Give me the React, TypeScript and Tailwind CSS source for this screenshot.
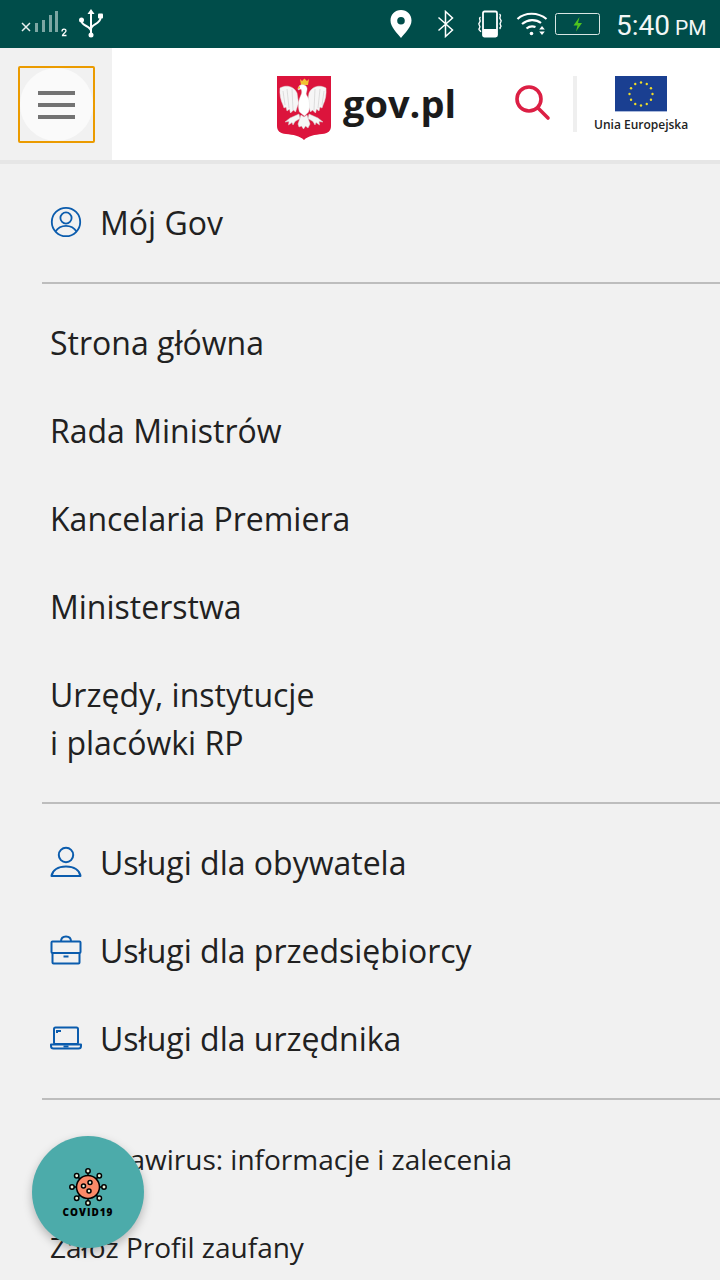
import React from 'react';

const BLUE = '#0b5cad';

const UserCircle = () => (
  <svg width="32" height="32" viewBox="0 0 32 32" fill="none" stroke={BLUE} strokeWidth="1.800">
    <circle cx="16" cy="16" r="14.2" />
    <circle cx="16" cy="12" r="5.6" />
    <path d="M5.500 25.500C8 21.500 11.500 19.800 16 19.800s8 1.700 10.500 5.700" />
  </svg>
);

const UserIcon = () => (
  <svg width="32" height="32" viewBox="0 0 32 32" fill="none" stroke={BLUE} strokeWidth="2">
    <circle cx="16" cy="9" r="7.2" />
    <path d="M1.500 30C2.500 24 8 20.500 16 20.500S29.500 24 30.500 30Z" strokeLinejoin="round" />
  </svg>
);

const BriefcaseIcon = () => (
  <svg width="32" height="30" viewBox="0 0 32 30" fill="none" stroke={BLUE} strokeWidth="2">
    <path d="M11 6.500C11 3 13 1.500 16 1.500S21 3 21 6.500" />
    <rect x="1.500" y="6.500" width="29" height="11.500" rx="1" />
    <rect x="2.500" y="18" width="27" height="10.500" rx="1" />
    <path d="M13.500 21.500h5" />
  </svg>
);

const LaptopIcon = () => (
  <svg width="32" height="24" viewBox="0 0 32 24" fill="none" stroke={BLUE} strokeWidth="2">
    <rect x="4" y="1.500" width="24" height="16.500" rx="1.500" />
    <path d="M7 7V5h4" />
    <path d="M1 18.500h30v1.500c0 1.500-1 2.500-2.500 2.500h-25C2 22.500 1 21.500 1 20Z" strokeLinejoin="round" />
    <path d="M13.500 20.500h5" />
  </svg>
);

const Eagle = () => (
  <svg width="54" height="64" viewBox="0 0 54 64">
    <path d="M0 0h54v50c0 5-3 7.500-9 8-7 .6-14 2-18 6-4-4-11-5.400-18-6-6-.5-9-3-9-8Z" fill="#dc143c" />
    <path d="M23 3l2 2 2.500-2.500L30 5l2-2-1 6h-7Z" fill="#f2c230" />
    {/* wings */}
    <path d="M20 17C17 10 9 8.500 3 12c-.5 6 .5 12 3 17l1 3 2-1 1 4 2.500-2 1 4 3-3 2 2 3-9Z" fill="#f6f6f6" stroke="#dcdcdc" strokeWidth="0.5" />
    <path d="M32 17c3-7 11-8.500 17-5 .5 6-.5 12-3 17l-1 3-2-1-1 4-2.500-2-1 4-3-3-2 2-3-9Z" fill="#f6f6f6" stroke="#dcdcdc" strokeWidth="0.5" />
    <path d="M6 15l2 14M10 13l2 19M15 13l1 21M47 15l-2 14M43 13l-2 19M38 13l-1 21" stroke="#d6d6d6" strokeWidth="0.8" />
    {/* head and body */}
    <path d="M22 10c2-2 7-2 8 2 .5 3-1.500 5-.5 7 3 4 4 11 2 17l-4 4-5-4c-2-6-1-12 1.500-17 1-2 1-4 0-6l-3 1Z" fill="#fff" stroke="#dedede" strokeWidth="0.4" />
    <path d="M20 12.500l3-2.500v2.500Z" fill="#f2c230" />
    {/* tail and legs */}
    <path d="M24 39l3 2 3-2 3 9-2 4-2.500-2-2 3-2-3-2.500 1-1-3Z" fill="#f6f6f6" stroke="#d6d6d6" strokeWidth="0.5" />
    <path d="M22 38l-9 4-5 4 4-.5-.5 3.500 3.500-2.500 1 2.500 2-3.500 5-3ZM32 38l9 4 5 4-4-.5.5 3.500-3.500-2.500-1 2.500-2-3.500-5-3Z" fill="#f6f6f6" stroke="#cfcfcf" strokeWidth="0.5" />
  </svg>
);

const EuFlag = () => {
  const stars = Array.from({ length: 12 }, (_, i) => {
    const a = (i * Math.PI) / 6;
    return { x: 26 + 11.500 * Math.sin(a), y: 18 - 11.500 * Math.cos(a) };
  });
  return (
    <svg width="52" height="36" viewBox="0 0 52 36">
      <rect width="52" height="35" fill="#1a3f91" />
      <rect y="35" width="52" height="1" fill="#a9b9dc" />
      {stars.map((s, i) => (
        <circle key={i} cx={s.x} cy={s.y} r="1.200" fill="#f0dc28" />
      ))}
    </svg>
  );
};

const Virus = () => {
  const spikes = [0, 45, 90, 135, 180, 225, 270, 315];
  return (
    <svg width="38" height="38" viewBox="0 0 38 38" fill="none" stroke="#000" strokeWidth="1.500">
      {spikes.map((deg) => {
        const a = (deg * Math.PI) / 180;
        const c = Math.cos(a);
        const s = Math.sin(a);
        return (
          <g key={deg}>
            <path d={`M${19 + 11 * s} ${19 - 11 * c}L${19 + 14 * s} ${19 - 14 * c}`} />
            <circle cx={19 + 16 * s} cy={19 - 16 * c} r="2.200" fill="#e8f1da" />
          </g>
        );
      })}
      <circle cx="19" cy="19" r="11.500" fill="#fb8a68" />
      <circle cx="14.500" cy="18" r="2" fill="#e8f1da" />
      <circle cx="21" cy="14.500" r="2" fill="#e8f1da" />
      <circle cx="20" cy="23" r="2" fill="#e8f1da" />
    </svg>
  );
};

const StatusBar = () => (
  <div className="h-12 bg-[#004d4a] flex items-center text-white shrink-0">
    <svg className="ml-5" width="48" height="28" viewBox="0 0 48 28">
      <path d="M2 13l8 8M10 13l-8 8" stroke="#e8f0ef" strokeWidth="1.500" />
      <rect x="15" y="13" width="3" height="9" fill="#7da6a3" />
      <rect x="22" y="10" width="3" height="12" fill="#7da6a3" />
      <rect x="29" y="5" width="3" height="17" fill="#7da6a3" />
      <rect x="35" y="1" width="3" height="21" fill="#7da6a3" />
      <path d="M42 21.500c0-3 4-3 4-.5 0 1.500-3.500 2.500-3.500 4.500H46.500" stroke="#fff" strokeWidth="1.300" fill="none" />
    </svg>
    <svg className="ml-[10px]" width="26" height="30" viewBox="0 0 26 30" fill="none" stroke="#fff" strokeWidth="2">
      <path d="M13 3v23" />
      <path d="M13 0l3.500 5h-7Z" fill="#fff" stroke="none" />
      <circle cx="13" cy="26" r="2.500" fill="#fff" stroke="none" />
      <circle cx="3.500" cy="11" r="2.500" fill="#fff" stroke="none" />
      <rect x="20" y="4.500" width="5" height="5" rx="1" fill="#fff" stroke="none" />
      <path d="M3.500 12c0 5 9.500 5 9.500 10M22.500 9c0 6-9.500 6-9.500 11" />
    </svg>
    <svg className="ml-[286px]" width="22" height="28" viewBox="0 0 22 28">
      <path fillRule="evenodd" d="M11 0C5 0 .5 4.500.5 10.500.5 17 7 23 11 28c4-5 10.500-11 10.500-17.500C21.500 4.500 17 0 11 0Zm0 7a3.800 3.800 0 1 1 0 7.600A3.800 3.800 0 0 1 11 7Z" fill="#fff" />
    </svg>
    <svg className="ml-[25px]" width="18" height="28" viewBox="0 0 18 28" fill="none" stroke="#fff" strokeWidth="1.500">
      <path d="M1.500 7.500l14 12.500-7 6.500V1.500l7 6.500-14 12.500" />
    </svg>
    <svg className="ml-[21px]" width="28" height="28" viewBox="0 0 28 28" fill="none" stroke="#fff" strokeWidth="1.800">
      <rect x="7" y="1.500" width="14" height="25" rx="1.500" />
      <rect x="7" y="19" width="14" height="7.500" fill="#fff" stroke="none" />
      <path d="M4.500 7c-3 2 1.500 3-1 5.500s2 3 0 5.500 2 2 1 4M23.500 4c3 2-1.500 3 1 5.500s-2 3 0 5.500-2 2 0 4" strokeWidth="1.400" />
    </svg>
    <svg className="ml-[12px]" width="32" height="26" viewBox="0 0 32 26" fill="none" stroke="#fff" strokeWidth="2.200">
      <path d="M1.500 8C9 1 22 1 30.500 8" />
      <path d="M6 13c6-5 14-5 19-1" />
      <path d="M10.500 17.500c3-2.500 6.500-2.500 9-1.500" />
      <circle cx="15.500" cy="22.500" r="1.800" fill="#fff" stroke="none" />
      <path d="M26 15l-2.800 3.500h5.600ZM26 24l-2.800-3.500h5.600Z" fill="#fff" stroke="none" />
    </svg>
    <svg className="ml-[7px]" width="46" height="24" viewBox="0 0 46 24" fill="none">
      <rect x=".5" y="1.500" width="44" height="21" rx="2" stroke="#d8e6e4" strokeWidth="1" />
      <path d="M24.500 5l-6 8.500h4l-1.500 6 6-8.500h-4Z" fill="#4fc31f" />
    </svg>
    <span className="ml-[15px] mt-1 text-[28px] leading-none font-['Roboto',sans-serif] text-[#f2f7f6] whitespace-nowrap">
      5:40 <span className="text-[21px] -ml-[2px]">PM</span>
    </span>
  </div>
);

const Header = () => (
  <div className="h-[112px] flex bg-white shrink-0">
    <div className="w-[112px] bg-[#f1f1f1] pt-[18px] pl-[18px]">
      <button className="w-[77px] h-[77px] border-2 border-[#eb9b00] rounded-[2px] flex items-center justify-center">
        <span className="w-[73px] h-[73px] rounded-full bg-[#fafafa] flex flex-col items-center justify-center gap-2">
          <span className="w-[37px] h-1 bg-[#737373]" />
          <span className="w-[37px] h-1 bg-[#737373]" />
          <span className="w-[37px] h-1 bg-[#737373]" />
        </span>
      </button>
    </div>
    <div className="flex-1 flex items-start pt-7">
      <div className="ml-[165px]"><Eagle /></div>
      <span className="ml-3 mt-[2px] w-[112px] text-[38px] leading-[50px] font-bold text-[#1b1b1b]">gov.pl</span>
      <svg className="ml-[60px] mt-[8px]" width="36" height="38" viewBox="0 0 36 38" fill="none" stroke="#dc1f44" strokeWidth="3.600" strokeLinecap="round">
        <circle cx="14" cy="15" r="12" />
        <path d="M23 24l10 10" />
      </svg>
      <span className="ml-[22px] w-1 h-14 bg-[#efefef]" />
      <div className="ml-[17px] flex flex-col items-center">
        <EuFlag />
        <span className="mt-[5px] text-[12px] leading-[16px] font-semibold text-[#222] whitespace-nowrap">Unia Europejska</span>
      </div>
    </div>
  </div>
);

const Item = ({ icon, children }: { icon?: React.ReactNode; children: React.ReactNode }) => (
  <div className="flex items-center h-[88px] pl-[50px] text-[32px] leading-[49px] text-[#212121] whitespace-nowrap">
    {icon && <span className="w-[50px] flex items-center">{icon}</span>}
    <span>{children}</span>
  </div>
);

const Divider = () => <div className="ml-[42px] h-[2px] bg-[#bdbdbd]" />;

export default function App() {
  return (
    <div className="relative w-[720px] h-[1280px] overflow-hidden bg-[#f1f1f1] flex flex-col font-['Open_Sans',sans-serif]">
      <StatusBar />
      <Header />
      <div className="h-1 bg-[#e6e6e6] shrink-0" />
      <div className="pt-[14px]">
        <Item icon={<UserCircle />}>Mój Gov</Item>
        <div className="h-4" />
        <Divider />
        <div className="pt-[14px]">
          <Item>Strona główna</Item>
          <Item>Rada Ministrów</Item>
          <Item>Kancelaria Premiera</Item>
          <Item>Ministerstwa</Item>
          <div className="pl-[50px] pt-[21px] pb-[35px] text-[32px] leading-[48px] text-[#212121]">
            Urzędy, instytucje<br />i placówki RP
          </div>
        </div>
        <Divider />
        <div className="pt-[14px]">
          <Item icon={<UserIcon />}>Usługi dla obywatela</Item>
          <Item icon={<BriefcaseIcon />}>Usługi dla przedsiębiorcy</Item>
          <Item icon={<LaptopIcon />}>Usługi dla urzędnika</Item>
        </div>
        <div className="h-4" />
        <Divider />
        <div className="pt-[15px] pl-[50px] text-[28px] leading-[88px] text-[#212121] whitespace-nowrap">
          <div>Koronawirus: informacje i zalecenia</div>
          <div>Załóż Profil zaufany</div>
        </div>
      </div>
      <div className="absolute left-8 top-[1136px] w-28 h-28 rounded-full bg-[#4cabaa] shadow-[0_4px_10px_rgba(0,0,0,0.25)] flex flex-col items-center pt-[32px]">
        <Virus />
        <span className="-mt-[1px] text-[10px] leading-[14px] font-extrabold tracking-[1px] text-black">COVID19</span>
      </div>
    </div>
  );
}
